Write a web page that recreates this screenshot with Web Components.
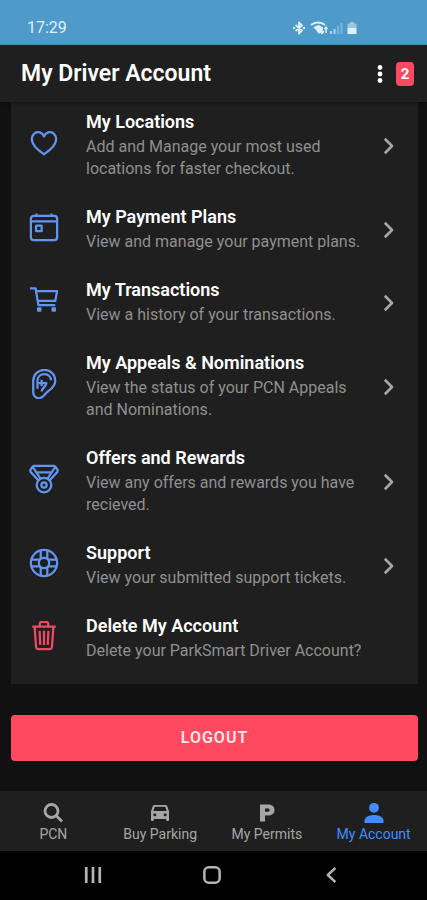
<!DOCTYPE html>
<html lang="en">
<head>
<meta charset="utf-8">
<meta name="viewport" content="width=device-width, initial-scale=1">
<title>My Driver Account</title>
<style>
html, body { height: 100%; }
body { margin: 0; background: #111; font-family: Roboto, "Liberation Sans", sans-serif; color: #fff; }
</style>
</head>
<body>
<driver-app></driver-app>
<script>
const ICONS = {
  heart: ['0 0 32 32', '<path d="M16 28C12.500 25.500 3 19.500 3 12C3 7.500 6 4.500 9.500 4.500C12.500 4.500 14.800 6.300 16 9C17.200 6.300 19.500 4.500 22.500 4.500C26 4.500 29 7.500 29 12C29 19.500 19.500 25.500 16 28Z"/>'],
  calendar: ['0 0 32 32', '<rect x="2" y="4" width="28" height="26" rx="3"/><path d="M2 10H30M8 4V1.500M24 4V1.500"/><rect x="7.500" y="14.500" width="6" height="6" rx=".5"/>'],
  cart: ['0 0 32 32', '<path d="M1 3.500H7L10 21.500H28M7.500 6.500H30L28 17H9.300"/><g fill="currentColor" stroke="none"><rect x="8.500" y="23.700" width="4.800" height="4.800" rx="1"/><rect x="24" y="23.700" width="4.800" height="4.800" rx="1"/></g>'],
  ear: ['0 0 32 32', '<path d="M4.500 13C4.500 6 9.500 1 16.500 1C23 1 28 6 28 12.500C28 20 21 22.500 18 26C15.500 28.500 14 31.200 10.800 31.200C7 31.200 4.500 28.500 4.500 25Z"/><path d="M9 21V13C9 8.500 12 5.500 16.500 5.500C20.500 5.500 23.500 8.500 23.500 12"/><path d="M13.500 11.500V18.500M10 15H18.500C18.500 19 14 19.500 13.500 24"/>'],
  medal: ['0 0 32 32', '<path d="M10.500 18L1.800 8.500C1.200 7.700 1.200 7 1.700 6.200L3.500 3.200C3.900 2.500 4.500 2 5.500 2H26.500C27.500 2 28.100 2.500 28.500 3.200L30.300 6.200C30.800 7 30.800 7.700 30.200 8.500L21.500 18M8.500 9H23.500M4 3L12.500 16M28 3L19.500 16"/><circle cx="16" cy="22.500" r="7.800"/><circle cx="16" cy="22.500" r="2.800"/>'],
  support: ['0 0 32 32', '<circle cx="16" cy="16" r="14"/><circle cx="16" cy="16" r="5.500"/><path d="M12.500 2.500V11.700M19.500 2.500V11.700M12.500 20.300V29.500M19.500 20.300V29.500M2.500 12.500H11.700M2.500 19.500H11.700M20.300 12.500H29.500M20.300 19.500H29.500"/>'],
  trash: ['0 0 32 32', '<path d="M6 6L7.500 27.500C7.600 29.100 8.500 30 10 30H22C23.500 30 24.400 29.100 24.500 27.500L26 6M3.500 6H28.500M11.500 5.500V3C11.500 1.800 12.300 1 13.500 1H18.500C19.700 1 20.500 1.800 20.500 3V5.500M16 10.500V25.500M11.300 10.500L12 25.500M20.700 10.500L20 25.500"/>'],
  chevron: ['0 0 12 20', '<path d="M2 2L10 10L2 18"/>'],
  dots: ['0 0 6 20', '<g fill="currentColor" stroke="none"><circle cx="3" cy="3.500" r="2.400"/><circle cx="3" cy="10" r="2.400"/><circle cx="3" cy="16.500" r="2.400"/></g>'],
  search: ['0 0 20 20', '<circle cx="8.500" cy="8" r="6.500" stroke-width="2.800"/><path d="M13 12.500L19 18.500" stroke-width="2.800"/>'],
  car: ['0 0 20 20', '<path fill="currentColor" stroke="none" fill-rule="evenodd" d="M4.500 2H15.500C16.400 2 17 2.400 17.300 3.200L19 8.500V17.200C19 17.700 18.700 18 18.200 18H17C16.500 18 16.200 17.700 16.200 17.200V16H3.800V17.200C3.800 17.700 3.500 18 3 18H1.800C1.300 18 1 17.700 1 17.200V8.500L2.700 3.200C3 2.400 3.600 2 4.500 2ZM4.800 3.700L3.300 8H16.700L15.200 3.700ZM4.800 10.200A1.500 1.500 0 1 0 4.800 13.200A1.500 1.500 0 1 0 4.800 10.200ZM15.200 10.200A1.500 1.500 0 1 0 15.200 13.200A1.500 1.500 0 1 0 15.200 10.200Z"/>'],
  permit: ['0 0 20 20', '<path fill="currentColor" stroke="none" fill-rule="evenodd" d="M3 1.500H11C15.300 1.500 17.500 3.800 17.500 7C17.500 10.200 15.300 12.500 11 12.500H8V18.500H3ZM8 5.500V8.700H10.700C12 8.700 12.700 8.100 12.700 7.100C12.700 6.100 12 5.500 10.700 5.500Z"/>'],
  person: ['0 0 20 20', '<g fill="currentColor" stroke="none"><circle cx="10" cy="4.800" r="4.900"/><path d="M.5 20V18C.5 14 5 12 10 12S19.500 14 19.500 18V20Z"/></g>'],
  bluetooth: ['0 0 14 14', '<path stroke-width="1.800" d="M3.500 4L10 9.500L7 12.500V1.500L10 4.500L3.500 10M1 7H3M11 7H13"/>'],
  wifi: ['0 0 18 14', '<path stroke-width="2" d="M1 4C5 .8 11 .8 15 4M4 7C7 5 9 5 11 6.500"/><path fill="currentColor" stroke="none" d="M4 6.500L9 4L13 8L9 13Z"/><path stroke-width="1.500" d="M12 6V12M10 10L12 12.500L14 10M16 12V6M14.500 8L16 6L17.500 8"/>'],
  signal: ['0 0 14 14', '<path stroke-width="2" opacity=".65" d="M2 13V10M5.500 13V8"/><path stroke-width="2" opacity=".3" d="M9 13V5M12.500 13V2"/>'],
  battery: ['0 0 10 14', '<path fill="currentColor" stroke="none" opacity=".5" d="M3 1H7V2.500H9.500V7H.5V2.500H3Z"/><path fill="currentColor" stroke="none" d="M.5 7H9.500V13H.5Z"/>'],
  recents: ['0 0 20 20', '<path stroke-width="3" d="M2.500 1V19M10 1V19M17.500 1V19"/>'],
  home: ['0 0 20 20', '<rect x="1.500" y="1.500" width="17" height="17" rx="5" stroke-width="2.800"/>'],
  back: ['0 0 12 20', '<path stroke-width="2.800" d="M10.500 2L2 10L10.500 18"/>']
};

function define(name, html, setup) {
  const template = document.createElement('template');
  template.innerHTML = html;
  customElements.define(name, class extends HTMLElement {
    connectedCallback() {
      if (this.shadowRoot) return;
      this.attachShadow({ mode: 'open' }).append(template.content.cloneNode(true));
      if (setup) setup(this, this.shadowRoot);
    }
  });
}

function makeIcon(name, className) {
  const icon = document.createElement('app-icon');
  icon.setAttribute('name', name);
  icon.className = className;
  return icon;
}

define('app-icon', `<style>
:host { display: block; flex: none; height: 20px; }
svg { display: block; height: 100%; width: auto; fill: none; stroke: currentColor; stroke-width: var(--stroke, 2.4); stroke-linejoin: round; }
</style><svg aria-hidden="true"></svg>`, (el, root) => {
  const svg = root.querySelector('svg');
  const [box, art] = ICONS[el.getAttribute('name')];
  svg.setAttribute('viewBox', box);
  svg.innerHTML = art;
});

define('status-bar', `<style>
:host { display: flex; align-items: center; justify-content: space-between; height: 45px; padding: 10px 70px 0 27px; box-sizing: border-box; background: #4e9aca; color: #e1f1fb; font-size: 16px; line-height: 20px; }
div { display: flex; align-items: center; gap: 4px; }
app-icon { height: 14px; }
app-icon[name="wifi"] { margin-right: -3px; }
</style><time>17:29</time><div><app-icon name="bluetooth"></app-icon><app-icon name="wifi"></app-icon><app-icon name="signal"></app-icon><app-icon name="battery"></app-icon></div>`);

define('app-header', `<style>
:host { display: flex; align-items: center; gap: 13px; height: 57px; padding: 0 13px 0 21px; box-sizing: border-box; background: #1f1f1f; position: relative; box-shadow: 0 1px 3px #0006; }
h1 { flex: 1; margin: 0; font-size: 23px; line-height: 28px; font-weight: 600; }
button { border: 0; padding: 0; background: none; color: inherit; font: inherit; }
.badge { background: #ff4961; border-radius: 4px; width: 18px; font-size: 15px; line-height: 24px; font-weight: 700; text-align: center; }
</style><h1><slot></slot></h1><button aria-label="More options"><app-icon name="dots"></app-icon></button><span class="badge">2</span>`);

define('menu-row', `<style>
:host { display: block; }
a { display: grid; grid-template-columns: 30px 1fr 12px; column-gap: 27px; align-items: center; padding: 13px 23px 13px 18px; color: inherit; text-decoration: none; }
.icon { color: #6295f0; height: 30px; margin-bottom: 6px; }
:host([tone="danger"]) .icon { color: #ed4a60; }
.arrow { color: #a6a6a6; height: 18px; margin-top: 1px; --stroke: 3; }
h2 { margin: 0 0 3px; font-size: 18px; line-height: 22px; font-weight: 600; }
p { margin: 0 -8px 0 0; font-size: 16px; line-height: 22px; color: #8f8f8f; }
</style><a href="#"><div><h2><slot name="title"></slot></h2><p><slot></slot></p></div></a>`, (el, root) => {
  const link = root.querySelector('a');
  link.prepend(makeIcon(el.getAttribute('icon'), 'icon'));
  if (!el.hasAttribute('plain')) link.append(makeIcon('chevron', 'arrow'));
});

define('tab-item', `<style>
:host { display: block; flex: 1 1 0; }
a { display: flex; flex-direction: column; align-items: center; gap: 2px; padding-top: 3px; color: #a6a6a6; text-decoration: none; font-size: 14px; line-height: 18px; white-space: nowrap; }
:host([selected]) a { color: #428cff; }
</style><a href="#"><span><slot></slot></span></a>`, (el, root) => {
  root.querySelector('a').prepend(makeIcon(el.getAttribute('icon'), 'icon'));
});

define('tab-bar', `<style>
:host { display: flex; align-items: center; height: 60px; background: #1f1f1f; }
</style><slot></slot>`);

define('system-nav', `<style>
:host { display: flex; align-items: center; height: 49px; padding: 0 36px 2px 33px; box-sizing: border-box; background: #000; color: #b4b4b4; }
button { flex: 1; display: flex; justify-content: center; border: 0; padding: 0; background: none; color: inherit; }
app-icon { height: 18px; }
</style><button aria-label="Recents"><app-icon name="recents"></app-icon></button><button aria-label="Home"><app-icon name="home"></app-icon></button><button aria-label="Back"><app-icon name="back"></app-icon></button>`);

define('driver-app', `<style>
:host { display: flex; flex-direction: column; min-height: 100%; }
main { flex: 1; padding: 0 9px 30px 11px; }
section { background: #1f1f1f; margin-top: -4px; padding-bottom: 9px; }
.logout { display: block; width: 100%; margin-top: 31px; padding: 12px; border: 0; border-radius: 4px; background: #ff4961; color: #ffe9ec; font: 600 16px/22px Roboto, "Liberation Sans", sans-serif; letter-spacing: 1px; }
</style>
<status-bar></status-bar>
<app-header>My Driver Account</app-header>
<main>
<section>
<menu-row icon="heart"><span slot="title">My Locations</span>Add and Manage your most used locations for faster checkout.</menu-row>
<menu-row icon="calendar"><span slot="title">My Payment Plans</span>View and manage your payment plans.</menu-row>
<menu-row icon="cart"><span slot="title">My Transactions</span>View a history of your transactions.</menu-row>
<menu-row icon="ear"><span slot="title">My Appeals &amp; Nominations</span>View the status of your PCN Appeals and Nominations.</menu-row>
<menu-row icon="medal"><span slot="title">Offers and Rewards</span>View any offers and rewards you have recieved.</menu-row>
<menu-row icon="support"><span slot="title">Support</span>View your submitted support tickets.</menu-row>
<menu-row icon="trash" tone="danger" plain><span slot="title">Delete My Account</span>Delete your ParkSmart Driver Account?</menu-row>
</section>
<button class="logout">LOGOUT</button>
</main>
<tab-bar><tab-item icon="search">PCN</tab-item><tab-item icon="car">Buy Parking</tab-item><tab-item icon="permit">My Permits</tab-item><tab-item icon="person" selected>My Account</tab-item></tab-bar>
<system-nav></system-nav>`);
</script>
</body>
</html>
